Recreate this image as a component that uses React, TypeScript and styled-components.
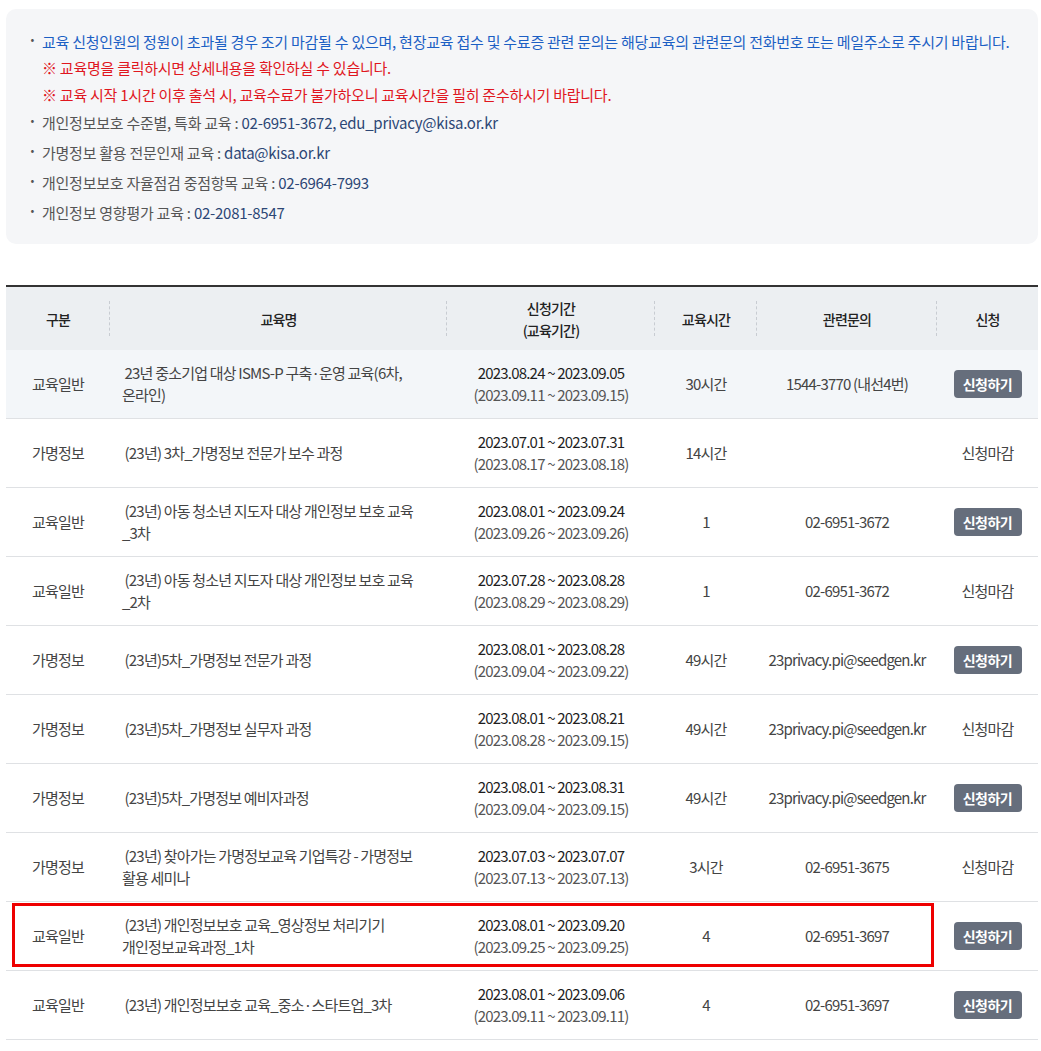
import styled, { createGlobalStyle } from "styled-components";

const GlobalStyle = createGlobalStyle`
  body {
    margin: 0;
    background: #fff;
    font-family: "Noto Sans CJK KR", "Noto Sans", sans-serif;
    color: #333;
  }
`;

const Wrapper = styled.div`
  width: 1032px;
  padding: 9px 0 0 6px;
`;

const InfoBox = styled.div`
  background-color: #f5f6f8;
  border-radius: 10px;
  padding: 18px 24px 20px 24px;
  height: 235px;
  box-sizing: border-box;
`;

const InfoList = styled.ul`
  list-style: none;
  margin: 0;
  padding: 0;
`;

const InfoItem = styled.li<{ $tone?: "blue" | "gray" }>`
  position: relative;
  padding-left: 12px;
  font-size: 15px;
  letter-spacing: -0.25px;
  line-height: 30px;
  color: ${(p) => (p.$tone === "blue" ? "#1c5fc4" : "#555")};
  &::before {
    content: "·";
    position: absolute;
    left: -2px;
    top: -2px;
    color: #555;
    font-weight: 700;
  }
`;

const Notice = styled.p<{ $first?: boolean }>`
  margin: ${(p) => (p.$first ? "-3px" : "0")} 0 0;
  padding-left: 12px;
  font-size: 15px;
  letter-spacing: -0.25px;
  line-height: 27px;
  color: #e0161e;
`;

const Contact = styled.span`
  color: #2c4675;
`;

const Table = styled.table`
  margin-top: 41px;
  width: 100%;
  border-collapse: collapse;
  table-layout: fixed;
  border-top: 2px solid #333;
  font-size: 15px;
  letter-spacing: -0.8px;
`;

const HeadCell = styled.th<{ $divider?: boolean }>`
  position: relative;
  height: 63px;
  background-color: #eceff2;
  font-size: 14px;
  font-weight: 500;
  color: #222;
  line-height: 22px;
  padding: 0;
  &::after {
    content: "";
    display: ${(p) => (p.$divider ? "block" : "none")};
    position: absolute;
    right: 0;
    top: 14px;
    height: 35px;
    border-right: 1px dashed #c8ccd2;
  }
`;

const Row = styled.tr<{ $shaded?: boolean }>`
  background-color: ${(p) => (p.$shaded ? "#f3f6f9" : "#fff")};
  border-bottom: 1px solid #dfe1e4;
`;

const Cell = styled.td`
  position: relative;
  height: 68px;
  padding: 0;
  text-align: center;
  color: #444;
  line-height: 22px;
  vertical-align: middle;
`;

const TitleCell = styled(Cell)`
  padding: 0 32px 0 12px;
  text-align: left;
  word-break: keep-all;
`;

const Period = styled.div`
  color: #1e1e1e;
`;

const Duration = styled.div`
  color: #555;
`;

const ApplyButton = styled.button`
  width: 68px;
  height: 28px;
  border: none;
  border-radius: 4px;
  background-color: #666e7c;
  color: #fff;
  font-family: inherit;
  font-size: 14px;
  font-weight: 700;
  letter-spacing: -0.5px;
  cursor: pointer;
`;

const Closed = styled.span`
  color: #444;
`;

const Highlight = styled.span`
  position: absolute;
  left: 6px;
  top: 1px;
  width: 922px;
  height: 64px;
  border: 3px solid #ee0000;
  box-sizing: border-box;
  pointer-events: none;
`;

interface Course {
  category: string;
  title: string;
  apply: string;
  period: string;
  hours: string;
  contact: string;
  open: boolean;
  marked?: boolean;
}

const courses: Course[] = [
  {
    category: "교육일반",
    title: "\u00a023년 중소기업 대상 ISMS-P 구축·운영 교육(6차, 온라인)",
    apply: "2023.08.24 ~ 2023.09.05",
    period: "(2023.09.11 ~ 2023.09.15)",
    hours: "30시간",
    contact: "1544-3770 (내선4번)",
    open: true,
  },
  {
    category: "가명정보",
    title: "\u00a0(23년) 3차_가명정보 전문가 보수 과정",
    apply: "2023.07.01 ~ 2023.07.31",
    period: "(2023.08.17 ~ 2023.08.18)",
    hours: "14시간",
    contact: "",
    open: false,
  },
  {
    category: "교육일반",
    title: "\u00a0(23년) 아동 청소년 지도자 대상 개인정보 보호 교육 _3차",
    apply: "2023.08.01 ~ 2023.09.24",
    period: "(2023.09.26 ~ 2023.09.26)",
    hours: "1",
    contact: "02-6951-3672",
    open: true,
  },
  {
    category: "교육일반",
    title: "\u00a0(23년) 아동 청소년 지도자 대상 개인정보 보호 교육 _2차",
    apply: "2023.07.28 ~ 2023.08.28",
    period: "(2023.08.29 ~ 2023.08.29)",
    hours: "1",
    contact: "02-6951-3672",
    open: false,
  },
  {
    category: "가명정보",
    title: "\u00a0(23년)5차_가명정보 전문가 과정",
    apply: "2023.08.01 ~ 2023.08.28",
    period: "(2023.09.04 ~ 2023.09.22)",
    hours: "49시간",
    contact: "23privacy.pi@seedgen.kr",
    open: true,
  },
  {
    category: "가명정보",
    title: "\u00a0(23년)5차_가명정보 실무자 과정",
    apply: "2023.08.01 ~ 2023.08.21",
    period: "(2023.08.28 ~ 2023.09.15)",
    hours: "49시간",
    contact: "23privacy.pi@seedgen.kr",
    open: false,
  },
  {
    category: "가명정보",
    title: "\u00a0(23년)5차_가명정보 예비자과정",
    apply: "2023.08.01 ~ 2023.08.31",
    period: "(2023.09.04 ~ 2023.09.15)",
    hours: "49시간",
    contact: "23privacy.pi@seedgen.kr",
    open: true,
  },
  {
    category: "가명정보",
    title: "\u00a0(23년) 찾아가는 가명정보교육 기업특강 - 가명정보 활용 세미나",
    apply: "2023.07.03 ~ 2023.07.07",
    period: "(2023.07.13 ~ 2023.07.13)",
    hours: "3시간",
    contact: "02-6951-3675",
    open: false,
  },
  {
    category: "교육일반",
    title: "\u00a0(23년) 개인정보보호 교육_영상정보 처리기기 개인정보교육과정_1차",
    apply: "2023.08.01 ~ 2023.09.20",
    period: "(2023.09.25 ~ 2023.09.25)",
    hours: "4",
    contact: "02-6951-3697",
    open: true,
    marked: true,
  },
  {
    category: "교육일반",
    title: "\u00a0(23년) 개인정보보호 교육_중소·스타트업_3차",
    apply: "2023.08.01 ~ 2023.09.06",
    period: "(2023.09.11 ~ 2023.09.11)",
    hours: "4",
    contact: "02-6951-3697",
    open: true,
  },
];

function App() {
  return (
    <Wrapper>
      <GlobalStyle />
      <InfoBox>
        <InfoList>
          <InfoItem $tone="blue">
            교육 신청인원의 정원이 초과될 경우 조기 마감될 수 있으며, 현장교육 접수 및 수료증 관련 문의는 해당교육의 관련문의 전화번호 또는 메일주소로 주시기 바랍니다.
          </InfoItem>
        </InfoList>
        <Notice $first>※ 교육명을 클릭하시면 상세내용을 확인하실 수 있습니다.</Notice>
        <Notice>※ 교육 시작 1시간 이후 출석 시, 교육수료가 불가하오니 교육시간을 필히 준수하시기 바랍니다.</Notice>
        <InfoList>
          <InfoItem>
            개인정보보호 수준별, 특화 교육 : <Contact>02-6951-3672, edu_privacy@kisa.or.kr</Contact>
          </InfoItem>
          <InfoItem>
            가명정보 활용 전문인재 교육 : <Contact>data@kisa.or.kr</Contact>
          </InfoItem>
          <InfoItem>
            개인정보보호 자율점검 중점항목 교육 : <Contact>02-6964-7993</Contact>
          </InfoItem>
          <InfoItem>
            개인정보 영향평가 교육 : <Contact>02-2081-8547</Contact>
          </InfoItem>
        </InfoList>
      </InfoBox>

      <Table>
        <colgroup>
          <col style={{ width: 104 }} />
          <col style={{ width: 337 }} />
          <col style={{ width: 208 }} />
          <col style={{ width: 102 }} />
          <col style={{ width: 180 }} />
          <col style={{ width: 101 }} />
        </colgroup>
        <thead>
          <tr>
            <HeadCell $divider>구분</HeadCell>
            <HeadCell $divider>교육명</HeadCell>
            <HeadCell $divider>
              신청기간
              <br />
              (교육기간)
            </HeadCell>
            <HeadCell $divider>교육시간</HeadCell>
            <HeadCell $divider>관련문의</HeadCell>
            <HeadCell>신청</HeadCell>
          </tr>
        </thead>
        <tbody>
          {courses.map((c, i) => (
            <Row key={i} $shaded={i === 0}>
              <Cell>
                {c.marked && <Highlight />}
                {c.category}
              </Cell>
              <TitleCell>{c.title}</TitleCell>
              <Cell>
                <Period>{c.apply}</Period>
                <Duration>{c.period}</Duration>
              </Cell>
              <Cell>{c.hours}</Cell>
              <Cell>{c.contact}</Cell>
              <Cell>{c.open ? <ApplyButton>신청하기</ApplyButton> : <Closed>신청마감</Closed>}</Cell>
            </Row>
          ))}
        </tbody>
      </Table>
    </Wrapper>
  );
}

export default App;
